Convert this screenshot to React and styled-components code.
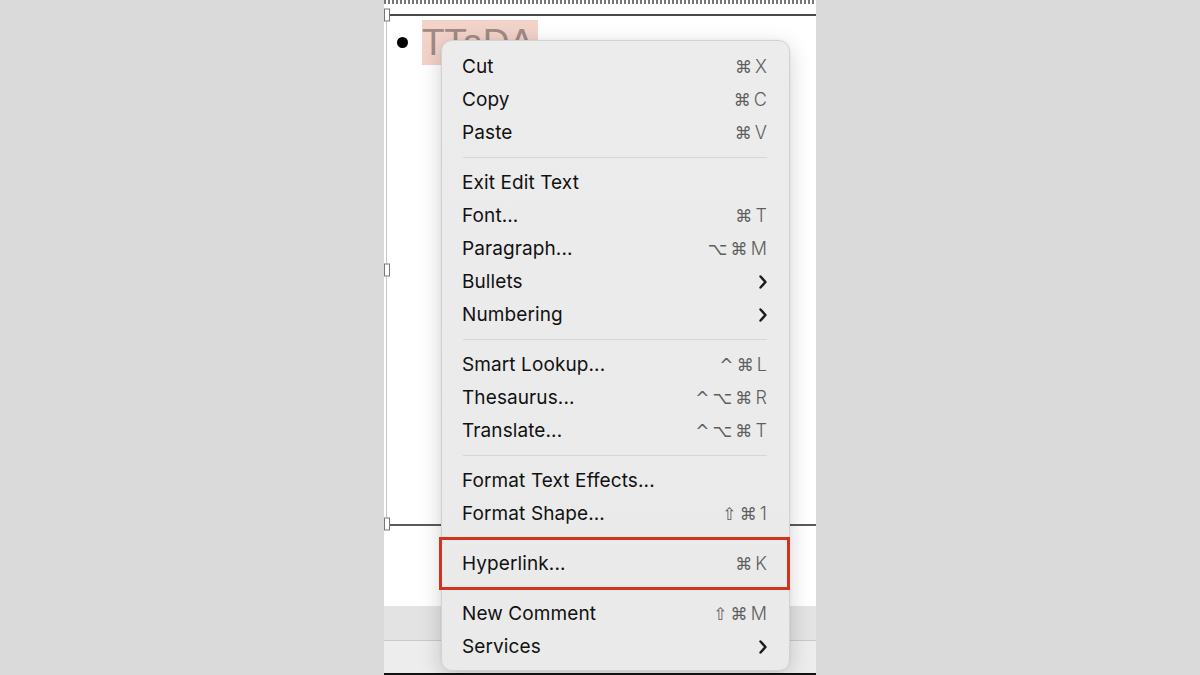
import React from "react";
import styled, { createGlobalStyle } from "styled-components";

const Global = createGlobalStyle`
  html, body { margin: 0; padding: 0; }
  body { width: 1200px; height: 675px; overflow: hidden; background: #dadada; font-family: Inter, "Noto Sans", "DejaVu Sans", sans-serif; }
`;

const Page = styled.div`
  width: 1200px;
  height: 675px;
  background: #dadada;
  display: flex;
  justify-content: center;
`;

const Slide = styled.div`
  width: 432px;
  background: #ffffff;
  display: flex;
  flex-direction: column;
  position: relative;
`;

const Ruler = styled.div`
  height: 4px;
  background: repeating-linear-gradient(90deg, #555 0 2px, transparent 2px 4px);
  opacity: 0.8;
`;

const TextBox = styled.div`
  margin-top: 10px;
  margin-left: 2px;
  height: 512px;
  border-top: 2px solid #4a4a4a;
  border-bottom: 2px solid #5a5a5a;
  border-left: 1px solid #c4c4c4;
  position: relative;
  box-sizing: border-box;
  padding: 4px 0 0 10px;
`;

const Handle = styled.span`
  position: absolute;
  left: -3px;
  top: ${(p) => p.$top};
  width: 4px;
  height: 11px;
  background: #fff;
  border: 1px solid #777;
  transform: translateY(-50%);
`;

const BulletLine = styled.div`
  display: flex;
  align-items: center;
  gap: 14px;
`;

const Dot = styled.span`
  width: 11px;
  height: 11px;
  border-radius: 50%;
  background: #000;
`;

const Highlighted = styled.span`
  background: #f2d2c9;
  color: #a08a83;
  font-family: "Liberation Sans", Arial, sans-serif;
  font-size: 37px;
  font-weight: 400;
  line-height: 45px;
  padding: 0 4px 0 0;
  letter-spacing: -0.3px;
`;

const WhiteGap = styled.div`
  height: 80px;
`;

const GreyBand = styled.div`
  height: 34px;
  background: #e3e3e3;
  border-bottom: 1px solid #c9c9c9;
`;

const LightBand = styled.div`
  height: 32px;
  background: #ededed;
`;

const BlackBar = styled.div`
  flex: 1;
  background: #111;
`;

const Menu = styled.div`
  position: absolute;
  left: 57px;
  top: 40px;
  width: 349px;
  box-sizing: border-box;
  padding: 9px 0 7px;
  background: linear-gradient(180deg, #ececec 0%, #eaeaea 100%);
  border: 1px solid #d2d2d2;
  border-radius: 11px;
  box-shadow: 0 6px 22px rgba(0, 0, 0, 0.18), 0 0 2px rgba(0, 0, 0, 0.08);
`;

const Item = styled.div`
  height: 33px;
  display: flex;
  align-items: center;
  justify-content: space-between;
  padding: 0 22px 0 20px;
  position: relative;
  color: #111;
  font-size: 19px;
  letter-spacing: 0.1px;
  ${(p) =>
    p.$marked &&
    `
    &::after {
      content: "";
      position: absolute;
      left: -3px;
      right: -1px;
      top: -10px;
      bottom: -10px;
      border: 3px solid #d2331f;
      box-sizing: border-box;
      pointer-events: none;
    }
  `}
`;

const Label = styled.span``;

const Shortcut = styled.span`
  color: #5e5e5e;
  font-size: 18px;
  font-weight: 300;
  display: flex;
  gap: 3px;
  align-items: center;
`;

const Sym = styled.span`
  font-family: "DejaVu Sans", sans-serif;
  font-size: 17px;
  font-weight: 400;
  color: #5e5e5e;
`;

const Separator = styled.div`
  height: 1px;
  background: #d6d6d6;
  margin: 8px 22px 8px 21px;
`;

const Chevron = () => (
  <svg width="10" height="16" viewBox="0 0 10 16" style={{ marginRight: -1 }}>
    <path d="M2.5 2.5 L7.5 8 L2.5 13.5" fill="none" stroke="#1b1b1b" strokeWidth="2.4" strokeLinecap="round" strokeLinejoin="round" />
  </svg>
);

const keys = (parts) => (
  <Shortcut>
    {parts.map((p, i) =>
      /[⌘⌥⇧^]/.test(p) ? <Sym key={i}>{p}</Sym> : <span key={i}>{p}</span>
    )}
  </Shortcut>
);

const groups = [
  [
    ["Cut", ["⌘", "X"]],
    ["Copy", ["⌘", "C"]],
    ["Paste", ["⌘", "V"]],
  ],
  [
    ["Exit Edit Text", null],
    ["Font...", ["⌘", "T"]],
    ["Paragraph...", ["⌥", "⌘", "M"]],
    ["Bullets", "sub"],
    ["Numbering", "sub"],
  ],
  [
    ["Smart Lookup...", ["^", "⌘", "L"]],
    ["Thesaurus...", ["^", "⌥", "⌘", "R"]],
    ["Translate...", ["^", "⌥", "⌘", "T"]],
  ],
  [
    ["Format Text Effects...", null],
    ["Format Shape...", ["⇧", "⌘", "1"]],
  ],
  [["Hyperlink...", ["⌘", "K"], true]],
  [
    ["New Comment", ["⇧", "⌘", "M"]],
    ["Services", "sub"],
  ],
];

export default function App() {
  return (
    <>
      <Global />
      <Page>
        <Slide>
          <Ruler />
          <TextBox>
            <Handle $top="-1px" />
            <Handle $top="50%" />
            <Handle $top="100%" />
            <BulletLine>
              <Dot />
              <Highlighted>TTaDA</Highlighted>
            </BulletLine>
          </TextBox>
          <WhiteGap />
          <GreyBand />
          <LightBand />
          <BlackBar />
          <Menu>
            {groups.map((g, gi) => (
              <React.Fragment key={gi}>
                {gi > 0 && <Separator />}
                {g.map(([label, sc, marked]) => (
                  <Item key={label} $marked={marked}>
                    <Label>{label}</Label>
                    {sc === "sub" ? <Chevron /> : sc ? keys(sc) : null}
                  </Item>
                ))}
              </React.Fragment>
            ))}
          </Menu>
        </Slide>
      </Page>
    </>
  );
}
